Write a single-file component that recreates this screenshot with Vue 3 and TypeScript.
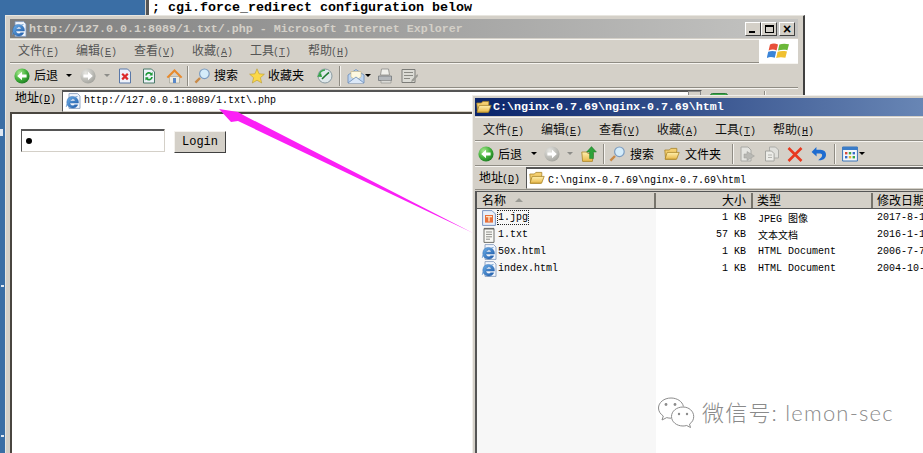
<script setup lang="ts">
interface MenuEntry {
  zh: string;
  key: string;
}

interface ToolItem {
  kind: 'icon' | 'label' | 'sep' | 'drop';
  ml: number;
  id?: string;
  w?: number;
  text?: string;
  dim?: boolean;
}

interface FileRow {
  name: string;
  icon: string;
  size: string;
  type: string;
  date: string;
}

const menus: MenuEntry[] = [
  { zh: '文件', key: 'F' },
  { zh: '编辑', key: 'E' },
  { zh: '查看', key: 'V' },
  { zh: '收藏', key: 'A' },
  { zh: '工具', key: 'T' },
  { zh: '帮助', key: 'H' },
];

const ieTools: ToolItem[] = [
  { kind: 'icon', ml: 4, id: 'i-back', w: 16 },
  { kind: 'label', ml: 4, text: '后退', w: 24 },
  { kind: 'drop', ml: 8 },
  { kind: 'icon', ml: 7, id: 'i-forward', w: 16 },
  { kind: 'drop', ml: 8, dim: true },
  { kind: 'icon', ml: 6, id: 'i-stop', w: 16 },
  { kind: 'icon', ml: 8, id: 'i-refresh', w: 16 },
  { kind: 'icon', ml: 9, id: 'i-home', w: 17 },
  { kind: 'sep', ml: 4 },
  { kind: 'icon', ml: 5, id: 'i-search', w: 17 },
  { kind: 'label', ml: 3, text: '搜索', w: 24 },
  { kind: 'icon', ml: 11, id: 'i-star', w: 16 },
  { kind: 'label', ml: 3, text: '收藏夹', w: 36 },
  { kind: 'icon', ml: 12, id: 'i-history', w: 17 },
  { kind: 'sep', ml: 6 },
  { kind: 'icon', ml: 6, id: 'i-mail', w: 18 },
  { kind: 'drop', ml: 0 },
  { kind: 'icon', ml: 5, id: 'i-print', w: 17 },
  { kind: 'icon', ml: 7, id: 'i-edit', w: 17 },
];

const explorerTools: ToolItem[] = [
  { kind: 'icon', ml: 3, id: 'i-back', w: 16 },
  { kind: 'label', ml: 4, text: '后退', w: 24 },
  { kind: 'drop', ml: 9 },
  { kind: 'icon', ml: 6, id: 'i-forward', w: 16 },
  { kind: 'drop', ml: 7, dim: true },
  { kind: 'icon', ml: 7, id: 'i-up', w: 16 },
  { kind: 'sep', ml: 6 },
  { kind: 'icon', ml: 4, id: 'i-search', w: 17 },
  { kind: 'label', ml: 4, text: '搜索', w: 24 },
  { kind: 'icon', ml: 10, id: 'i-folder', w: 16 },
  { kind: 'label', ml: 5, text: '文件夹', w: 36 },
  { kind: 'sep', ml: 11 },
  { kind: 'icon', ml: 5, id: 'i-move', w: 16 },
  { kind: 'icon', ml: 9, id: 'i-copy', w: 16 },
  { kind: 'icon', ml: 7, id: 'i-delete', w: 16 },
  { kind: 'icon', ml: 8, id: 'i-undo', w: 16 },
  { kind: 'sep', ml: 7 },
  { kind: 'icon', ml: 6, id: 'i-views', w: 16 },
  { kind: 'drop', ml: 1 },
];

const files: FileRow[] = [
  { name: '1.jpg', icon: 'i-jpg', size: '1 KB', type: 'JPEG 图像', date: '2017-8-1' },
  { name: '1.txt', icon: 'i-txt', size: '57 KB', type: '文本文档', date: '2016-1-1' },
  { name: '50x.html', icon: 'i-ie', size: '1 KB', type: 'HTML Document', date: '2006-7-7' },
  { name: 'index.html', icon: 'i-ie', size: '1 KB', type: 'HTML Document', date: '2004-10-' },
];
</script>

<template>
  <div class="desktop">
    <svg class="sprite" aria-hidden="true">
      <defs>
        <radialGradient id="g-green" cx="35%" cy="30%" r="75%">
          <stop offset="0" stop-color="#a8e890" />
          <stop offset="0.6" stop-color="#3fae38" />
          <stop offset="1" stop-color="#1c7a22" />
        </radialGradient>
        <radialGradient id="g-grey" cx="35%" cy="30%" r="75%">
          <stop offset="0" stop-color="#e6e6e2" />
          <stop offset="1" stop-color="#a2a29c" />
        </radialGradient>
        <linearGradient id="g-folder" x1="0" y1="0" x2="0" y2="1">
          <stop offset="0" stop-color="#fff0b0" />
          <stop offset="1" stop-color="#e8b848" />
        </linearGradient>
        <linearGradient id="g-ie" x1="0" y1="0" x2="1" y2="1">
          <stop offset="0" stop-color="#6cb0ea" />
          <stop offset="1" stop-color="#1e5aa8" />
        </linearGradient>
      </defs>
      <symbol id="i-back" viewBox="0 0 16 16">
        <circle cx="8" cy="8" r="7.6" fill="url(#g-green)" />
        <path d="M3.2 8 8 3.8v2.6h4.600v3.200H8v2.600z" fill="#fff" />
      </symbol>
      <symbol id="i-forward" viewBox="0 0 16 16">
        <circle cx="8" cy="8" r="7.6" fill="url(#g-grey)" />
        <path d="M12.8 8 8 3.8v2.6H3.4v3.2H8v2.6z" fill="#fff" />
      </symbol>
      <symbol id="i-stop" viewBox="0 0 16 16">
        <path d="M2.5 1h8l3 3v11h-11z" fill="#eef2fa" stroke="#5a78a8" />
        <path d="M5.2 5.8 10.8 11.4M10.8 5.8 5.2 11.4" stroke="#dc2a2a" stroke-width="2.2" />
      </symbol>
      <symbol id="i-refresh" viewBox="0 0 16 16">
        <path d="M2.5 1h8l3 3v11h-11z" fill="#eef2fa" stroke="#4a7a68" />
        <path d="M5 7.5a3 3 0 0 1 5.4-1.4M11 9a3 3 0 0 1-5.4 1.4" fill="none" stroke="#1e9a38" stroke-width="1.8" />
        <path d="M11.6 4v3.4H8.4zM4.4 12.6V9.2h3.2z" fill="#1e9a38" />
      </symbol>
      <symbol id="i-home" viewBox="0 0 17 16">
        <path d="M3.5 8.5v6.5h10V8.5z" fill="#f0ece0" stroke="#9a9a90" stroke-width=".6" />
        <path d="M.6 9 8.5 1l7.9 8-1.6 1.2L8.5 4 2.2 10.2z" fill="#e88a2c" />
        <path d="M7 10h3v5H7z" fill="#5a88c8" />
      </symbol>
      <symbol id="i-search" viewBox="0 0 17 16">
        <path d="M6 10 1.4 14.6" stroke="#c88a48" stroke-width="2.4" />
        <circle cx="10.4" cy="5.8" r="4.8" fill="#d4ecfa" stroke="#7c9cc0" stroke-width="1.2" />
      </symbol>
      <symbol id="i-star" viewBox="0 0 16 16">
        <path d="M8 .8 10.1 5.8l5.3.4-4 3.5 1.3 5.3L8 12.2 3.3 15 4.6 9.7.6 6.2l5.3-.4z" fill="#fbd848" stroke="#b89a30" stroke-width=".6" />
      </symbol>
      <symbol id="i-history" viewBox="0 0 17 16">
        <circle cx="9" cy="8" r="7" fill="#dfe8ea" stroke="#8a9aa0" />
        <path d="M1 8.5 5 5l1 4z" fill="#2a9a38" />
        <path d="M9 8 13 4.400M9 8 6 11" stroke="#1e7a30" stroke-width="1.6" />
        <path d="M3 8a6 6 0 0 1 6-6" fill="none" stroke="#3aa850" stroke-width="1.6" />
      </symbol>
      <symbol id="i-mail" viewBox="0 0 18 16">
        <path d="M1 7 9 1.500 17 7v8H1z" fill="#bcd4f0" stroke="#6a8cb8" stroke-width=".8" />
        <path d="M4 3.500h10V9l-5 3-5-3z" fill="#fdf8e0" stroke="#c0ac70" stroke-width=".5" />
        <path d="M1 15 9 9l8 6" fill="#dbe8f8" stroke="#6a8cb8" stroke-width=".8" />
      </symbol>
      <symbol id="i-print" viewBox="0 0 17 16">
        <path d="M4.500 1h7l1 6h-9z" fill="#f0f0ec" stroke="#8a8a88" stroke-width=".8" />
        <path d="M1.500 8h13v4.500h-13z" fill="#b4b8bc" stroke="#74787c" stroke-width=".8" />
        <path d="M4 12.500h10v2.500H4z" fill="#dcdcd8" stroke="#8a8a88" stroke-width=".6" />
      </symbol>
      <symbol id="i-edit" viewBox="0 0 17 16">
        <path d="M1 1.500h13v13H1z" fill="#dcdcd6" stroke="#7c7c78" />
        <path d="M3 4.500h9M3 7.500h9M3 10.500h6" stroke="#8a8a84" />
        <path d="M16.500 6 11 11.500 10 14l2.600-1L17 8z" fill="#9a9a94" />
      </symbol>
      <symbol id="i-ie" viewBox="0 0 16 16">
        <path d="M4 .6h8.600l2.400 2.400v12.400H4z" fill="#f2f6fc" stroke="#7c94b8" stroke-width=".8" />
        <path fill-rule="evenodd" d="M7.600 3.400a5.800 5.800 0 1 0 5.200 8.400H9.700a2.900 2.900 0 0 1-4.900-1.700h8.600a5.800 5.800 0 0 0-5.800-6.700zM4.900 7.900a2.800 2.800 0 0 1 5.400 0z" fill="url(#g-ie)" stroke="#1e5aa8" stroke-width=".4" />
        <path d="M1.300 13.800C1.200 11 5.500 5.500 12.500 3.400" fill="none" stroke="#5a94d0" stroke-width=".9" />
      </symbol>
      <symbol id="i-folder" viewBox="0 0 16 16">
        <path d="M.8 4h4.600l1.400-1.600h6v2.200l-1 8.600H1.600z" fill="#f4cf70" stroke="#a88428" stroke-width=".8" />
        <path d="M1 13.200 3.200 6.400h12l-2.600 6.800z" fill="url(#g-folder)" stroke="#a88428" stroke-width=".8" />
      </symbol>
      <symbol id="i-up" viewBox="0 0 16 16">
        <path d="M.8 6h5l1 1.400h5.600l-1 8H1.600z" fill="url(#g-folder)" stroke="#a88428" stroke-width=".8" />
        <path d="M10.500.6 15.400 6h-3v6.600H8.600V6h-3z" fill="#2ea23a" stroke="#1a7424" stroke-width=".5" />
      </symbol>
      <symbol id="i-move" viewBox="0 0 16 16">
        <path d="M2 1h7l3 3v11H2z" fill="#e4e4e0" stroke="#a8a8a4" />
        <path d="M8 5.500 15.400 10 8 14.500V12H5V8h3z" fill="#b8b8b4" stroke="#9c9c98" stroke-width=".5" />
      </symbol>
      <symbol id="i-copy" viewBox="0 0 16 16">
        <path d="M5.500 1h6l3 3v8h-9z" fill="#e0e0dc" stroke="#acaca8" />
        <path d="M1.500 5h6l2.600 2.600V15H1.500z" fill="#ecece8" stroke="#a4a4a0" />
        <path d="M4 9h4M4 11.500h4" stroke="#b4b4b0" />
      </symbol>
      <symbol id="i-delete" viewBox="0 0 16 16">
        <path d="M1.500 2 14.500 15M14.500 2 1.500 15" stroke="#e8391e" stroke-width="2.600" />
      </symbol>
      <symbol id="i-undo" viewBox="0 0 16 16">
        <path d="M5.400 1 .6 6l5 4.400V7.400h3.600c2.400 0 2.800 3-.2 5.200l-1.800 1.600c4.400.6 7.800-1.600 7.800-5.400 0-4.200-3.400-5-6.600-5H5.400z" fill="#1e6cd0" />
      </symbol>
      <symbol id="i-views" viewBox="0 0 16 16">
        <path d="M.6 1h14.800v14H.6z" fill="#f4f8fc" stroke="#3a74b8" />
        <path d="M.6 1h14.800v3H.6z" fill="#3a7cc8" />
        <path d="M3 6h2.400v2.400H3z" fill="#d84a3a" />
        <path d="M6.800 6h2.400v2.400H6.800z" fill="#3aa84a" />
        <path d="M10.600 6H13v2.400h-2.400z" fill="#3a6cc8" />
        <path d="M3 10h2.400v2.400H3z" fill="#3a6cc8" />
        <path d="M6.800 10h2.400v2.400H6.800z" fill="#e8b030" />
        <path d="M10.600 10H13v2.400h-2.400z" fill="#3aa84a" />
      </symbol>
      <symbol id="i-jpg" viewBox="0 0 16 16">
        <path d="M1.600.6h9.400l3.400 3.400v11.400H1.600z" fill="#e6eefa" stroke="#7a94c0" />
        <path d="M4 5h8v7.600H4z" fill="#e8703a" />
        <path d="M5 6.600h6M8 6.600v5" stroke="#fbe4c8" stroke-width="1.400" />
      </symbol>
      <symbol id="i-txt" viewBox="0 0 16 16">
        <path d="M3 1.600h10v13.800H3z" fill="#f8f8f4" stroke="#70706c" />
        <path d="M5 5h6M5 7.400h6M5 9.800h6M5 12.200h4" stroke="#8c8c88" />
        <path d="M4 .8v2M6 .8v2M8 .8v2M10 .8v2M12 .8v2" stroke="#60605c" />
      </symbol>
    </svg>

    <i class="speck speck-a"></i>
    <i class="speck speck-b"></i>
    <i class="speck speck-c"></i>

    <div class="console">; cgi.force_redirect configuration below</div>

    <section class="window ie">
      <header class="titlebar inactive">
        <svg class="title-icon" width="16" height="16"><use href="#i-ie" /></svg>
        <span class="title-text">http://127.0.0.1:8089/1.txt/.php - Microsoft Internet Explorer</span>
        <div class="caption">
          <span class="cap-btn"><i class="cap-min"></i></span>
          <span class="cap-btn"><i class="cap-max"></i></span>
          <span class="cap-btn cap-gap"><i class="cap-close">×</i></span>
        </div>
      </header>

      <div class="band menu-band ie-menu">
        <nav class="menu">
          <span v-for="m in menus" :key="m.zh" class="menu-item">
            <span class="zh">{{ m.zh }}</span><span class="key">(<u>{{ m.key }}</u>)</span>
          </span>
        </nav>
        <div class="throbber">
          <svg width="24" height="20" viewBox="0 0 24 20">
            <path d="M3 3.400c2.400-1.200 5-1.400 8 0l-1.400 6c-2.800-1.200-5.200-1-8 0z" fill="#e8503a" />
            <path d="M12.400 3.600c3-1.200 5.600-1.200 9.600-.4l-1.600 6c-3.400-.8-6-.6-9.400.4z" fill="#6cb83a" />
            <path d="M1.200 10.800c2.600-1 5-1.200 8-.2l-1.400 6.200c-3-1-5.200-1-8 .2z" fill="#3a84d8" />
            <path d="M10.600 10.800c3.200-1 5.800-1 9.400-.4l-1.600 6.400c-3.400-.8-6-.8-9.200.2z" fill="#f0c030" />
          </svg>
        </div>
      </div>

      <div class="band tool-band ie-tools">
        <template v-for="(t, i) in ieTools" :key="i">
          <svg v-if="t.kind === 'icon'" class="tool-icon" :width="t.w" height="16" :style="{ marginLeft: t.ml + 'px' }">
            <use :href="'#' + t.id" />
          </svg>
          <span v-else-if="t.kind === 'label'" class="tool-label" :style="{ marginLeft: t.ml + 'px' }">{{ t.text }}</span>
          <span v-else-if="t.kind === 'sep'" class="tool-sep" :style="{ marginLeft: t.ml + 'px' }"></span>
          <span v-else class="tool-drop" :class="{ dim: t.dim }" :style="{ marginLeft: t.ml + 'px' }"></span>
        </template>
      </div>

      <div class="band addr-band ie-addr">
        <span class="addr-label"><span class="zh">地址</span><span class="key">(<u>D</u>)</span></span>
        <div class="addr-box ie-box">
          <svg width="16" height="16"><use href="#i-ie" /></svg>
          <span class="addr-text">http://127.0.0.1:8089/1.txt\.php</span>
          <span class="addr-drop"></span>
        </div>
        <svg class="go-icon" width="18" height="16" viewBox="0 0 18 16">
          <rect x="0.5" y="0.5" width="17" height="15" rx="2" fill="#3aa848" stroke="#2a7838" />
        </svg>
        <span class="go-text">转到</span>
        <span class="tool-sep go-sep"></span>
        <span class="go-text links">链接</span>
      </div>

      <div class="page">
        <div class="login">
          <div class="password"><i class="dot"></i></div>
          <button class="login-btn" type="button">Login</button>
        </div>
      </div>
    </section>

    <svg class="arrow" width="923" height="453" viewBox="0 0 923 453">
      <polygon points="219,109 238,112 245,116 473,233 238,121 231,122" fill="#fb20f6" />
    </svg>

    <section class="window explorer">
      <header class="titlebar active">
        <svg class="title-icon" width="16" height="16"><use href="#i-folder" /></svg>
        <span class="title-text">C:\nginx-0.7.69\nginx-0.7.69\html</span>
      </header>

      <div class="band menu-band ex-menu">
        <nav class="menu dark">
          <span v-for="m in menus" :key="m.zh" class="menu-item">
            <span class="zh">{{ m.zh }}</span><span class="key">(<u>{{ m.key }}</u>)</span>
          </span>
        </nav>
      </div>

      <div class="band tool-band ex-tools">
        <template v-for="(t, i) in explorerTools" :key="i">
          <svg v-if="t.kind === 'icon'" class="tool-icon" :width="t.w" height="16" :style="{ marginLeft: t.ml + 'px' }">
            <use :href="'#' + t.id" />
          </svg>
          <span v-else-if="t.kind === 'label'" class="tool-label" :style="{ marginLeft: t.ml + 'px' }">{{ t.text }}</span>
          <span v-else-if="t.kind === 'sep'" class="tool-sep" :style="{ marginLeft: t.ml + 'px' }"></span>
          <span v-else class="tool-drop" :class="{ dim: t.dim }" :style="{ marginLeft: t.ml + 'px' }"></span>
        </template>
      </div>

      <div class="band addr-band ex-addr">
        <span class="addr-label"><span class="zh">地址</span><span class="key">(<u>D</u>)</span></span>
        <div class="addr-box">
          <svg width="16" height="16"><use href="#i-folder" /></svg>
          <span class="addr-text">C:\nginx-0.7.69\nginx-0.7.69\html</span>
        </div>
      </div>

      <div class="listing">
        <div class="list-head">
          <span class="col-name">名称<i class="sort-mark"></i></span>
          <span class="col-size">大小</span>
          <span class="col-type">类型</span>
          <span class="col-date">修改日期</span>
        </div>
        <div v-for="(f, i) in files" :key="f.name" class="list-row">
          <span class="cell-name">
            <svg width="16" height="16"><use :href="'#' + f.icon" /></svg>
            <span class="file-name" :class="{ focused: i === 0 }">{{ f.name }}</span>
          </span>
          <span class="cell-size">{{ f.size }}</span>
          <span class="cell-type">{{ f.type }}</span>
          <span class="cell-date">{{ f.date }}</span>
        </div>
      </div>
    </section>

    <div class="watermark">
      <svg width="40" height="34" viewBox="0 0 40 34">
        <path d="M15 2C8 2 2.500 6.500 2.500 12c0 3.200 1.800 6 4.800 8l-1.300 4 4.700-2.400c1.500.4 2.900.6 4.300.6" fill="#fff" stroke="#8c8c8c" stroke-width="1" />
        <path d="M15 2c6 0 11.400 3.400 12.400 8.400" fill="none" stroke="#8c8c8c" stroke-width="1" />
        <path d="M27 11c-6.500 0-11.500 4.200-11.500 9.500S20.500 30 27 30c1.300 0 2.500-.2 3.700-.5l3.800 2-1-3.400c2.700-1.800 4.200-4.400 4.200-7.600C37.700 15.200 33 11 27 11z" fill="#fff" stroke="#8c8c8c" stroke-width="1" />
        <circle cx="10" cy="8.500" r="1.400" fill="#8c8c8c" />
        <circle cx="19" cy="8.500" r="1.400" fill="#8c8c8c" />
        <circle cx="23" cy="18" r="1.200" fill="#8c8c8c" />
        <circle cx="31" cy="18" r="1.200" fill="#8c8c8c" />
      </svg>
      <span class="mark-text">微信号: lemon-sec</span>
    </div>
  </div>
</template>

<style scoped>
.desktop {
  position: relative;
  width: 923px;
  height: 453px;
  overflow: hidden;
  background: #3a6ea5;
  font-family: "Liberation Mono", "Noto Sans CJK SC", monospace;
  font-size: 10px;
  color: #000;
}
.sprite {
  display: block;
  width: 0;
  height: 0;
}
.speck {
  position: absolute;
  left: 1px;
  width: 3px;
  height: 2px;
  background: #dfe8f2;
}
.speck-a {
  left: 0;
  top: 129px;
  height: 7px;
}
.speck-b {
  top: 285px;
}
.speck-c {
  top: 435px;
}

.console {
  position: absolute;
  left: 145px;
  top: 0;
  width: 778px;
  height: 453px;
  box-sizing: border-box;
  padding-left: 6px;
  border-left: 1px solid #d4d0c8;
  box-shadow: inset 3px 0 0 #555;
  background: #fff;
  font-size: 13.33px;
  font-weight: 700;
  line-height: 15px;
  white-space: pre;
}

.window {
  position: absolute;
  display: flex;
  flex-direction: column;
  box-sizing: border-box;
  background: #d4d0c8;
}
.ie {
  left: 5px;
  top: 15px;
  width: 800px;
  height: 460px;
  padding: 3px 5px 0 4px;
  border-top: 1px solid #e8e6e0;
  border-right: 2px solid #404040;
  border-left: 1px solid #e8e6e0;
  box-shadow: inset -1px 0 0 #d4d0c8;
}
.explorer {
  left: 472px;
  top: 95px;
  width: 470px;
  height: 370px;
  padding: 2px 0 0 2px;
  border-top: 1px solid #f0eeea;
  border-left: 1px solid #f0eeea;
}

.titlebar {
  display: flex;
  align-items: center;
  height: 19px;
  flex: none;
  font-size: 11.67px;
  font-weight: 700;
  white-space: pre;
}
.titlebar.inactive {
  background: linear-gradient(90deg, #7e7e7e, #c4c4c2);
  color: #d4d0c8;
}
.titlebar.active {
  height: 18px;
  background: linear-gradient(90deg, #0a246a, #6c8ab8);
  color: #fff;
}
.title-icon {
  flex: none;
  margin: 0 2px 0 1px;
}
.explorer .title-icon {
  margin-right: 1px;
}
.caption {
  display: flex;
  margin-left: auto;
  margin-right: 3px;
}
.cap-btn {
  position: relative;
  display: flex;
  align-items: center;
  justify-content: center;
  width: 16px;
  height: 14px;
  box-sizing: border-box;
  background: #d4d0c8;
  border: 1px solid;
  border-color: #fff #404040 #404040 #fff;
}
.cap-gap {
  margin-left: 2px;
}
.cap-min {
  width: 6px;
  height: 2px;
  margin-top: 7px;
  margin-right: 2px;
  background: #000;
}
.cap-max {
  width: 9px;
  height: 8px;
  box-sizing: border-box;
  border: 1px solid #000;
  border-top-width: 2px;
}
.cap-close {
  font: 700 14px/12px "Liberation Sans", sans-serif;
  color: #000;
}

.band {
  display: flex;
  align-items: center;
  flex: none;
  box-sizing: border-box;
  margin-top: 1px;
  border-top: 1px solid #f6f4f0;
  border-bottom: 1px solid #8f8c84;
}
.ie-menu {
  height: 24px;
  margin-top: 1px;
}
.ie-menu .menu {
  padding-bottom: 2px;
}
.ie-tools {
  height: 25px;
  margin-top: 0;
}
.ie-tools .tool-label {
  padding-bottom: 2px;
}
.ie-addr {
  height: 24px;
  margin-top: 0;
  border-bottom: 0;
}
.ie-addr .addr-label {
  padding-bottom: 6px;
}
.ex-menu {
  height: 24px;
}
.ex-tools {
  height: 25px;
  margin-top: 0;
}
.ex-addr {
  height: 24px;
  margin-top: 0;
}
.ex-addr .addr-label {
  padding-bottom: 2px;
}
.ex-addr .addr-text {
  padding-top: 4px;
}

.menu {
  display: flex;
  gap: 17px;
  padding-left: 8px;
  color: #555;
}
.menu.dark {
  color: #111;
}
.menu-item {
  display: flex;
  align-items: baseline;
  width: 41px;
  white-space: pre;
}
.zh {
  font: 12px/14px "Noto Sans CJK SC", sans-serif;
}
.key {
  font-size: 10px;
  margin-left: -1px;
}
.throbber {
  display: flex;
  align-items: center;
  justify-content: center;
  margin-left: auto;
  width: 39px;
  height: 24px;
  margin-top: -1px;
  background: #fff;
}

.tool-icon {
  flex: none;
}
.tool-label {
  flex: none;
  font: 12px/14px "Noto Sans CJK SC", sans-serif;
}
.tool-sep {
  flex: none;
  width: 2px;
  height: 20px;
  box-sizing: border-box;
  border-left: 1px solid #8f8c84;
  background: #f6f4f0;
}
.tool-drop {
  flex: none;
  width: 0;
  height: 0;
  margin-right: 1px;
  border-top: 3px solid #000;
  border-left: 3px solid transparent;
  border-right: 3px solid transparent;
}
.tool-drop.dim {
  border-top-color: #8c8c88;
}

.addr-label {
  display: flex;
  align-items: baseline;
  flex: none;
  width: 47px;
  padding-left: 5px;
  white-space: pre;
}
.ex-addr .addr-label {
  padding-left: 4px;
}
.addr-box {
  display: flex;
  align-items: center;
  gap: 3px;
  flex: 1;
  height: 22px;
  box-sizing: border-box;
  padding-left: 2px;
  background: #fff;
  border: 1px solid;
  border-color: #555 #d4d0c8 #d4d0c8 #555;
  box-shadow: inset 0 1px 0 #555;
}
.ie-box {
  flex: none;
  width: 640px;
}
.addr-text {
  white-space: pre;
}
.addr-drop {
  width: 13px;
  height: 20px;
  margin-left: auto;
  background: #d4d0c8;
  box-sizing: border-box;
  border: 1px solid #888;
}
.go-icon {
  flex: none;
  margin-left: 8px;
}
.go-text {
  flex: none;
  margin-left: 7px;
  font: 12px/14px "Noto Sans CJK SC", sans-serif;
}
.go-sep {
  margin-left: 5px;
}
.links {
  margin-left: 5px;
}

.page {
  flex: 1;
  min-height: 0;
  background: #fff;
  border-top: 2px solid #4a4640;
  border-left: 2px solid #4a4640;
}
.login {
  display: flex;
  align-items: flex-start;
  padding: 15px 0 0 9px;
}
.password {
  display: flex;
  align-items: center;
  width: 144px;
  height: 23px;
  box-sizing: border-box;
  padding-left: 4px;
  border: 1px solid;
  border-color: #555 #d4d0c8 #d4d0c8 #555;
  box-shadow: inset 0 1px 0 #555;
}
.dot {
  width: 6px;
  height: 6px;
  border-radius: 50%;
  background: #000;
}
.login-btn {
  width: 52px;
  height: 22px;
  margin: 2px 0 0 9px;
  padding: 0;
  background: #d4d0c8;
  border: 1px solid;
  border-color: #f4f2ee #404040 #404040 #f4f2ee;
  font: 12px "Liberation Mono", monospace;
  color: #000;
}

.arrow {
  position: absolute;
  left: 0;
  top: 0;
}

.listing {
  flex: 1;
  min-height: 0;
  margin-top: 1px;
  border-top: 1px solid #555;
  border-left: 2px solid #555;
  background: linear-gradient(90deg, #f7f7f7 179px, #fff 179px);
}
.list-head,
.list-row {
  display: grid;
  grid-template-columns: 179px 97px 120px 1fr;
  align-items: center;
}
.list-head {
  height: 16px;
  background: #d4d0c8;
  border-bottom: 1px solid #555;
  font: 12px/14px "Noto Sans CJK SC", sans-serif;
}
.list-head > span {
  display: flex;
  align-items: center;
  height: 15px;
  box-sizing: border-box;
  border-right: 2px solid #77746c;
}
.col-name {
  padding-left: 5px;
}
.col-size {
  justify-content: flex-end;
  padding-right: 5px;
}
.col-type {
  padding-left: 4px;
}
.col-date {
  padding-left: 4px;
}
.sort-mark {
  width: 0;
  height: 0;
  margin-left: 9px;
  border-bottom: 4px solid #9a9a94;
  border-left: 4px solid transparent;
  border-right: 4px solid transparent;
}
.list-row {
  height: 17px;
  white-space: pre;
}
.cell-name {
  display: flex;
  align-items: center;
  padding-left: 4px;
}
.file-name {
  padding: 1px 0;
  border: 1px solid transparent;
}
.file-name.focused {
  border: 1px dotted #222;
}
.cell-size {
  padding-right: 7px;
  text-align: right;
}
.cell-type {
  padding-left: 5px;
}
.cell-date {
  padding-left: 4px;
}

.watermark {
  position: absolute;
  left: 656px;
  top: 396px;
  display: flex;
  align-items: center;
  gap: 6px;
}
.mark-text {
  font: 300 22px/30px Lato, "Noto Sans CJK SC", sans-serif;
  color: #8a8a8a;
  letter-spacing: 1.2px;
  white-space: pre;
}
</style>
